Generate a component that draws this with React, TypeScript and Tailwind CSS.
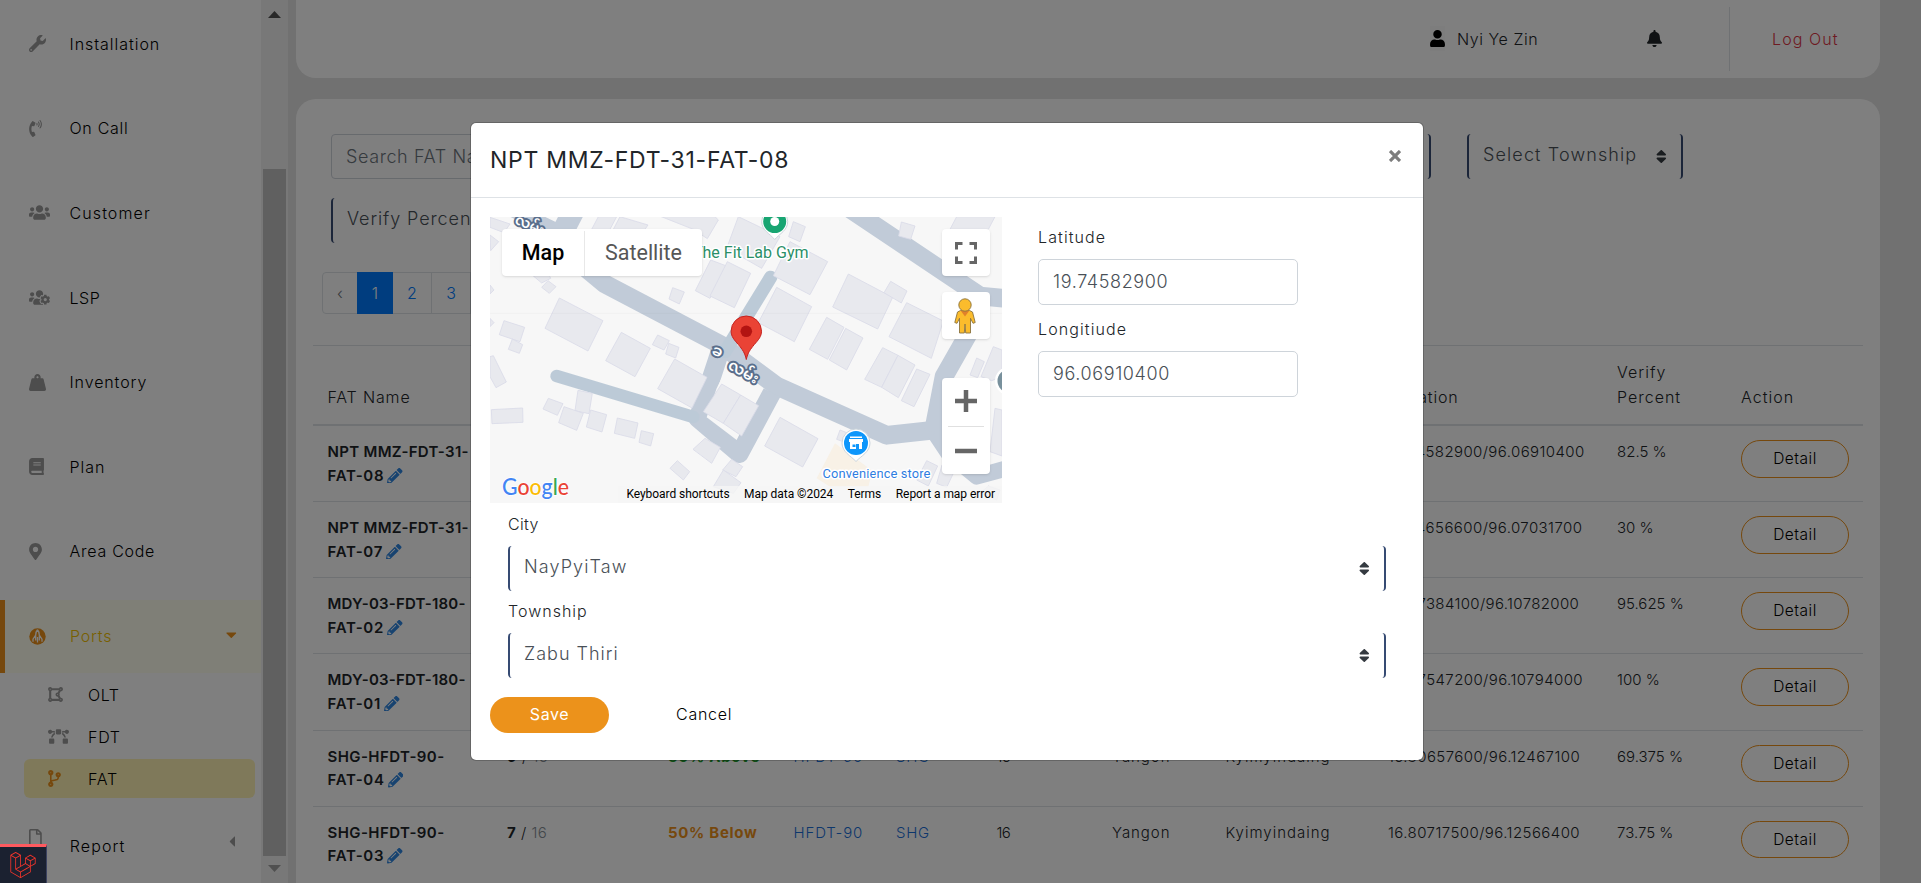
import type { ReactNode } from 'react';
import type { IconType } from 'react-icons';
import {
  FaBell,
  FaBezierCurve,
  FaBook,
  FaCaretDown,
  FaCaretLeft,
  FaCodeBranch,
  FaDrawPolygon,
  FaLaravel,
  FaMapMarkerAlt,
  FaPencilAlt,
  FaPhoneVolume,
  FaRegFile,
  FaSort,
  FaUser,
  FaUsers,
  FaUsersCog,
  FaWeightHanging,
  FaWrench,
} from 'react-icons/fa';

type NavItem = { label: string; icon: IconType; size: string; tracking: string };

const NAV: NavItem[] = [
  { label: 'Installation', icon: FaWrench, size: 'h-[17px] w-[17px]', tracking: 'tracking-[0.96px]' },
  { label: 'On Call', icon: FaPhoneVolume, size: 'h-[17px] w-[13px]', tracking: 'tracking-[0.7px]' },
  { label: 'Customer', icon: FaUsers, size: 'h-[17px] w-[21px]', tracking: 'tracking-[1.1px]' },
  { label: 'LSP', icon: FaUsersCog, size: 'h-[17px] w-[21px]', tracking: 'tracking-[0.5px]' },
  { label: 'Inventory', icon: FaWeightHanging, size: 'h-[17px] w-[17px]', tracking: 'tracking-[0.9px]' },
  { label: 'Plan', icon: FaBook, size: 'h-[17px] w-[15px]', tracking: 'tracking-[0.95px]' },
  { label: 'Area Code', icon: FaMapMarkerAlt, size: 'h-[17px] w-[13px]', tracking: 'tracking-[0.73px]' },
];

const SUB_NAV: (NavItem & { active?: boolean })[] = [
  { label: 'OLT', icon: FaDrawPolygon, size: 'h-[17px] w-[15px]', tracking: 'tracking-[0.5px]' },
  { label: 'FDT', icon: FaBezierCurve, size: 'h-[17px] w-[21px]', tracking: 'tracking-[0.75px]' },
  { label: 'FAT', icon: FaCodeBranch, size: 'h-[17px] w-[13px]', tracking: 'tracking-[0.75px]', active: true },
];

type Row = {
  name: [string, string];
  nameTracking: string;
  used: number;
  above: boolean;
  fdt: string;
  olt: string;
  city: string;
  township: string;
  location: string;
  locationTracking: string;
  percent: string;
};

const ROWS: Row[] = [
  { name: ['NPT MMZ-FDT-31-', 'FAT-08'], nameTracking: 'tracking-[0.32px]', used: 9, above: true, fdt: 'FDT-31', olt: 'NPT', city: 'NayPyiTaw', township: 'Zabu Thiri', location: '19.74582900/96.06910400', locationTracking: 'tracking-[0.4px]', percent: '82.5 %' },
  { name: ['NPT MMZ-FDT-31-', 'FAT-07'], nameTracking: 'tracking-[0.32px]', used: 9, above: true, fdt: 'FDT-31', olt: 'NPT', city: 'NayPyiTaw', township: 'Zabu Thiri', location: '19.74656600/96.07031700', locationTracking: 'tracking-[0.42px]', percent: '30 %' },
  { name: ['MDY-03-FDT-180-', 'FAT-02'], nameTracking: 'tracking-[0.2px]', used: 9, above: true, fdt: 'FDT-180', olt: 'MDY', city: 'Mandalay', township: 'Mahar Aung', location: '21.97384100/96.10782000', locationTracking: 'tracking-[0.36px]', percent: '95.625 %' },
  { name: ['MDY-03-FDT-180-', 'FAT-01'], nameTracking: 'tracking-[0.2px]', used: 9, above: true, fdt: 'FDT-180', olt: 'MDY', city: 'Mandalay', township: 'Mahar Aung', location: '21.97547200/96.10794000', locationTracking: 'tracking-[0.4px]', percent: '100 %' },
  { name: ['SHG-HFDT-90-', 'FAT-04'], nameTracking: 'tracking-[0.42px]', used: 9, above: true, fdt: 'HFDT-90', olt: 'SHG', city: 'Yangon', township: 'Kyimyindaing', location: '16.80657600/96.12467100', locationTracking: 'tracking-[0.43px]', percent: '69.375 %' },
  { name: ['SHG-HFDT-90-', 'FAT-03'], nameTracking: 'tracking-[0.42px]', used: 7, above: false, fdt: 'HFDT-90', olt: 'SHG', city: 'Yangon', township: 'Kyimyindaing', location: '16.80717500/96.12566400', locationTracking: 'tracking-[0.43px]', percent: '73.75 %' },
];

const COLUMNS =
  'grid grid-cols-[179.5px_161px_125.5px_102.5px_100.5px_115.5px_113.5px_162.5px_229px_124px_1fr] pl-[14.5px]';

function PortsIcon() {
  return (
    <svg className="size-[17px]" viewBox="0 0 17 17" fill="none">
      <circle cx="8.500" cy="8.500" r="8.200" fill="#ec911a" />
      <path
        d="M8.500 1.800C7 3.500 6.600 5 6.700 7L4 11.200v2.600M8.500 1.800C10 3.500 10.400 5 10.300 7l2.700 4.200v2.600M8.500 9v5.500M6.700 7v5.500M10.300 7v5.500"
        stroke="#fff"
        strokeWidth="1.300"
      />
    </svg>
  );
}

function Sidebar() {
  return (
    <aside className="flex h-full w-72 shrink-0 bg-white text-base font-light text-black">
      <nav className="flex w-[261px] flex-col pt-2">
        {NAV.map(({ label, icon: Icon, size, tracking }) => (
          <div key={label} className="mb-3 flex h-[72.6px] shrink-0 items-center pb-px pl-[29px]">
            <span className="w-[40.5px] text-[#9a9a9a]">
              <Icon className={size} />
            </span>
            <span className={tracking}>{label}</span>
          </div>
        ))}
        <div className="flex h-[73px] shrink-0 items-center border-l-5 border-[#ec911a] bg-[#ffffef] pb-px pl-6">
          <PortsIcon />
          <span className="ml-6 grow tracking-[0.8px] text-[#f0c000]">Ports</span>
          <FaCaretDown className="-mt-1 mr-6 h-[17px] w-[10.6px] text-[#ec911a]" />
        </div>
        {SUB_NAV.map(({ label, icon: Icon, size, tracking, active }) => (
          <div
            key={label}
            className={
              active
                ? 'ml-6 mt-[2px] flex h-[39px] w-[231px] shrink-0 items-center rounded-md bg-[#fff3b4] pl-6'
                : 'ml-6 flex h-[42px] w-[231px] shrink-0 items-center pl-6 pt-px'
            }
          >
            <span className={active ? 'w-10 text-[#ec911a]' : 'w-10 text-[#9a9a9a]'}>
              <Icon className={size} />
            </span>
            <span className={tracking}>{label}</span>
          </div>
        ))}
        <div className="mt-[11px] flex h-[73px] shrink-0 items-center pl-[29px]">
          <FaRegFile className="-mt-4 h-[17px] w-[12.8px] text-[#9a9a9a]" />
          <span className="ml-7 grow tracking-[1.1px]">Report</span>
          <FaCaretLeft className="-mt-2 mr-[26px] h-[17px] w-[6.4px] text-[#9a9a9a]" />
        </div>
      </nav>
      <div className="flex w-[27px] flex-col items-center bg-[#f1f1f1]">
        <svg className="mt-[11px] h-[7px] w-[13px] shrink-0" viewBox="0 0 13 7">
          <path d="M0 7 6.500 0 13 7z" fill="#505050" />
        </svg>
        <div className="mt-[151px] h-[687px] w-[23px] shrink-0 bg-[#c1c1c1]" />
        <svg className="mt-[9px] h-[7px] w-[13px] shrink-0" viewBox="0 0 13 7">
          <path d="M0 0h13L6.500 7z" fill="#a0a0a0" />
        </svg>
      </div>
    </aside>
  );
}

function Header() {
  return (
    <header className="flex h-[78px] shrink-0 items-center rounded-b-[20px] bg-white pb-px text-base font-light text-[#212529]">
      <span className="ml-[1134px] flex h-[25px] w-[15px] items-center bg-[#fafafa] text-black">
        <FaUser className="h-[17px] w-[15px]" />
      </span>
      <span className="ml-3 w-[189px] tracking-[0.55px]">Nyi Ye Zin</span>
      <FaBell className="ml-px h-[17px] w-[15px]" />
      <span className="ml-[67px] h-16 w-px bg-[#dee2e6]" />
      <span className="ml-[42px] tracking-[1.1px] text-[#dc3545]">Log Out</span>
    </header>
  );
}

function BracketSelect({ children, className }: { children: ReactNode; className: string }) {
  return (
    <div
      className={`flex h-[45px] items-center justify-between rounded border-x-2 border-[#364b73] px-[14px] text-lg font-light text-[#495057] ${className}`}
    >
      <span className="-mt-[3px]">{children}</span>
      <FaSort className="h-[17px] w-[10.6px] text-[#343a40]" />
    </div>
  );
}

function Pagination() {
  return (
    <div className="ml-[9px] mt-[29px] flex h-[42px] w-[300px] items-stretch rounded border border-[#dee2e6] text-base font-light text-[#007bff]">
      <span className="flex w-[34px] items-center justify-center text-[#6c757d]">‹</span>
      <span className="-my-px flex w-9 items-center justify-center bg-[#007bff] text-white">1</span>
      <span className="flex w-[39px] items-center justify-center border-r border-[#dee2e6]">2</span>
      <span className="flex w-[39px] items-center justify-center border-r border-[#dee2e6]">3</span>
      <span className="flex w-[39px] items-center justify-center">4</span>
    </div>
  );
}

function PortTable() {
  return (
    <div className="mt-[31px] w-[1550px] self-center text-[15px] font-light text-[#212529]">
      <div
        className={`${COLUMNS} h-[81px] items-end border-b-2 border-t border-[#dee2e6] pb-[14px] text-base leading-[25px] tracking-[0.85px]`}
      >
        <span>FAT Name</span>
        <span>Used</span>
        <span>Status</span>
        <span>FDT</span>
        <span>OLT</span>
        <span>Port</span>
        <span>City</span>
        <span>Township</span>
        <span>Location</span>
        <span className="w-20 tracking-[1px]">Verify Percent</span>
        <span className="tracking-[1px]">Action</span>
      </div>
      {ROWS.map((row, i) => (
        <div
          key={row.name.join('')}
          className={`${COLUMNS} items-start pt-[14px] leading-[23.5px] ${i === 0 ? 'h-[75px]' : 'h-[76.2px] border-t border-[#dee2e6]'}`}
        >
          <span className="flex flex-col items-start font-semibold">
            <span className={row.nameTracking}>{row.name[0]}</span>
            <span className="flex items-center tracking-[0.7px]">
              {row.name[1]}
              <FaPencilAlt className="ml-[3px] text-[15.5px] text-[#2f86e0]" />
            </span>
          </span>
          <span className="tracking-[0.5px]">
            <b className="font-bold">{row.used}</b> / <span className="text-[#868e96]">16</span>
          </span>
          {row.above ? (
            <span className="font-bold tracking-[0.7px] text-[#1e9e2e]">50% Above</span>
          ) : (
            <span className="font-bold tracking-[0.7px] text-[#ec911a]">50% Below</span>
          )}
          <span className="tracking-[0.85px] text-[#1b6fd8]">{row.fdt}</span>
          <span className="tracking-[0.7px] text-[#1b6fd8]">{row.olt}</span>
          <span className="tracking-[-0.6px]">16</span>
          <span className="tracking-[0.95px]">{row.city}</span>
          <span className="tracking-[1px]">{row.township}</span>
          <span className={row.locationTracking}>{row.location}</span>
          <span>{row.percent}</span>
          <span className="flex h-[37.500px] w-[108px] items-center justify-center rounded-full border border-[#ec911a] text-[15.5px] tracking-[0.5px] text-black">
            Detail
          </span>
        </div>
      ))}
    </div>
  );
}

const BUILDINGS = [
  '30,22 90,42 72,68 30,52',
  '30,75 56,95 32,122',
  '30,225 42,240 30,252',
  '30,325 42,338 30,350',
  '238,264 369,332 324,423 195,355',
  '72,332 134,352 120,395 58,374',
  '97,387 128,404 118,430 85,418',
  '40,437 79,516 48,533 30,500 30,440',
  '424,367 511,415 465,500 377,452',
  '533,375 568,392 552,420 517,404',
  '566,400 597,412 587,444 557,432',
  '584,447 681,502 636,594 533,536',
  '294,541 337,550 327,611 285,602',
  '205,565 249,581 232,616 189,597',
  '252,590 310,610 290,661 236,638',
  '332,600 380,614 366,666 319,651',
  '412,624 474,639 464,685 403,670',
  '484,662 521,671 512,708 477,697',
  '34,599 128,594 129,637 36,641',
  '204,212 228,230 208,250 185,232',
  '160,198 205,190 212,205 185,219',
  '578,233 613,246 598,282 567,267',
  '355,20 410,20 390,58 335,58',
  '420,20 504,45 495,58 400,58',
  '544,20 705,20 715,30 682,86 640,58',
  '692,150 745,170 690,265 646,242',
  '742,155 812,190 763,293 690,258',
  '775,20 900,80 845,175 740,115',
  '940,35 976,50 960,95 926,80',
  '930,95 1043,155 990,254 880,197',
  '890,232 995,290 943,395 835,338',
  '1105,192 1238,262 1193,357 1058,291',
  '1232,214 1281,243 1264,279 1212,248',
  '1280,278 1390,333 1354,445 1227,380',
  '1040,322 1092,352 1043,448 988,418',
  '1097,355 1149,384 1100,480 1048,450',
  '1208,413 1254,436 1205,532 1154,508',
  '1254,436 1305,465 1255,563 1205,532',
  '1310,477 1350,493 1302,590 1264,572',
  '675,685 721,712 695,760 639,718',
  '592,752 629,785 610,810 570,775',
  '755,748 788,770 768,800 728,780',
  '730,780 783,818 760,850 700,830',
  '900,622 1014,686 968,771 854,708',
  '1080,660 1110,672 1095,697 1070,688',
  '1264,36 1305,48 1292,88 1256,78',
  '1430,20 1545,20 1525,58 1410,58',
  '1490,444 1513,455 1493,503 1470,495',
  '1540,410 1566,420 1566,500 1535,512 1503,500',
  '1340,752 1373,768 1345,828 1310,810',
  '1386,765 1420,790 1400,832 1370,820',
  '1545,595 1566,600 1566,738 1530,725',
  '1525,828 1560,840 1550,870 1500,850',
  '725,522 782,555 730,640 670,605',
  '782,555 836,587 785,678 730,640',
];

function MapDrawing() {
  return (
    <svg className="block h-full w-full" viewBox="0 0 512 286" preserveAspectRatio="none">
      <rect width="512" height="286" fill="#f7f7f7" />
      <g transform="translate(-10 -7) scale(.33333)" strokeLinejoin="round">
        <path d="M1065 700l-55 105 40 25h115l12-48z" fill="#f8f1e6" />
        <g fill="none" stroke="#c1cbd8">
          <path d="M60-20 275 85" strokeWidth="46" />
          <path d="M282 0 225 110" strokeWidth="66" />
          <path d="M300 160l75 62 350 184 165 122 330 148 145-16 22 15" strokeWidth="56" />
          <path d="M1360 665l32-165 88-155 20-80" strokeWidth="56" />
          <path d="M1365 670l40 60 85 70 90-25" strokeWidth="48" />
          <path d="M1100-10 1500 258l80 8" strokeWidth="56" />
          <path d="M725 410l-33 100-38 115 124 106L876 548" strokeWidth="56" />
          <path d="M872 202 735 425" stroke="#bccad7" strokeWidth="40" strokeLinecap="round" />
          <path d="M230 498 640 621" stroke="#bccad7" strokeWidth="38" strokeLinecap="round" />
        </g>
        <path d="M743 468l104 67-77 155-90-68 30-87z" fill="#f7f7f7" />
        <g fill="#e8e9ee" stroke="#dadbe8" strokeWidth="2.500">
          {BUILDINGS.map((points) => (
            <polygon key={points} points={points} />
          ))}
        </g>
        <path d="M30 310h1536" stroke="#000" strokeOpacity=".03" strokeWidth="3" />
      </g>
      <g
        fontFamily="'Noto Sans Myanmar', Padauk, 'Noto Sans', sans-serif"
        fontSize="14"
        fontWeight="600"
        fill="#fff"
        stroke="#5a6f8c"
        strokeWidth="4"
        paintOrder="stroke"
      >
        <text transform="translate(221 137) rotate(20)" fontSize="15">
          ခ
        </text>
        <text transform="translate(237 151) rotate(30)" fontSize="15">
          လမ်း
        </text>
        <text transform="translate(24 6) rotate(24)">လမ်း</text>
      </g>
      <g
        fontFamily="Roboto, sans-serif"
        fontWeight="400"
        stroke="#fff"
        strokeWidth="3"
        paintOrder="stroke"
        strokeLinejoin="round"
      >
        <text x="318.500" y="41" fontSize="16" fill="#2b8f68" textAnchor="end">
          The Fit Lab Gym
        </text>
        <text x="332.500" y="260.500" fontSize="13" fill="#2f7de1" textLength="108">
          Convenience store
        </text>
      </g>
      <g transform="translate(284.700 4.500)">
        <path d="M0 18C-5 12-13 9-13 0A13 13 0 0 1 13 0C13 9 5 12 0 18z" fill="#fff" stroke="#ccd5dc" />
        <circle r="11.500" fill="#18a572" />
        <circle r="4.500" fill="#fff" />
      </g>
      <g transform="translate(366 226)">
        <path d="M0 18.500C-5 13-14 9-14 0A14 14 0 0 1 14 0C14 9 5 13 0 18.500z" fill="#fff" stroke="#ccd5dc" />
        <circle r="12" fill="#0d96fb" />
        <path d="M-6-6.500H6V-5H-6zM-7-4H7V-1H6V6H3V1H0V6H-6V-1H-7z" fill="#fff" />
        <path d="M-3.500 1.500h3v2.500h-3z" fill="#0d96fb" />
      </g>
      <g transform="translate(519 164)">
        <circle r="14" fill="#fff" />
        <circle r="11.500" fill="#78909c" />
      </g>
      <path
        d="M256.300 142.500c-1.500-7-4-10-8-15-4-4.500-7.200-8-7.200-13.300a15.200 15.200 0 0 1 30.400 0c0 5.300-3.200 8.800-7.200 13.300-4 5-6.500 8-8 15z"
        fill="#ea4335"
        stroke="#c5221f"
      />
      <circle cx="256.300" cy="114.300" r="5.800" fill="#b31412" />
      <text
        x="12"
        y="277.500"
        fontFamily="Lato, sans-serif"
        fontWeight="500"
        fontSize="23.500"
        textLength="67"
        lengthAdjust="spacingAndGlyphs"
        stroke="#fff"
        strokeWidth="1.500"
        paintOrder="stroke"
      >
        <tspan fill="#4285f4">G</tspan>
        <tspan fill="#ea4335">o</tspan>
        <tspan fill="#fbbc05">o</tspan>
        <tspan fill="#4285f4">g</tspan>
        <tspan fill="#34a853">l</tspan>
        <tspan fill="#ea4335">e</tspan>
      </text>
    </svg>
  );
}

function MapPanel() {
  return (
    <div className="relative h-[286px] w-[512px] shrink-0 overflow-hidden font-[Roboto,sans-serif] font-normal">
      <MapDrawing />
      <div className="absolute left-3 top-3 flex h-[47px] w-[200px] rounded-sm bg-white pt-0.5 text-[21.500px] shadow">
        <span className="flex w-[83px] items-center justify-center border-r border-[#e8e8e8] font-medium text-black">
          Map
        </span>
        <span className="flex grow items-center justify-center text-[#565656]">Satellite</span>
      </div>
      <div className="absolute right-3 top-3 flex h-[47px] w-12 items-center justify-center rounded-sm bg-white shadow">
        <svg className="size-[22px]" viewBox="0 0 22 22" fill="none" stroke="#666" strokeWidth="3">
          <path d="M1.500 7.500v-6h6M14.500 1.500h6v6M20.500 14.500v6h-6M7.500 20.500h-6v-6" />
        </svg>
      </div>
      <div className="absolute right-3 top-[75px] flex h-[47px] w-12 items-center justify-center rounded-sm bg-white shadow">
        <svg className="-ml-0.5 h-9 w-[22px]" viewBox="0 0 22 36">
          <path
            d="M6.500 12.500 3.500 14 .8 24.500l2.200.8 2.500-5V35h4.800l.7-9 .7 9h4.800V20.300l2.500 5 2.200-.8L18.500 14l-3-1.500z"
            fill="#fbbc2c"
            stroke="#8a7340"
            strokeWidth=".9"
          />
          <path d="M6.500 12.500h9L11 18.500z" fill="#e0812a" />
          <circle cx="11" cy="7" r="6.200" fill="#fbbc2c" stroke="#8a7340" strokeWidth=".9" />
        </svg>
      </div>
      <div className="absolute right-3 top-[161px] flex h-24 w-12 flex-col items-center justify-between rounded-sm bg-white py-3 shadow">
        <svg className="h-[22px] w-[22px]" viewBox="0 0 22 22" stroke="#666" strokeWidth="4.500">
          <path d="M11 0v22M0 11h22" />
        </svg>
        <span className="h-px w-9 bg-[#e0e0e0]" />
        <svg className="h-[22px] w-[22px]" viewBox="0 0 22 22" stroke="#666" strokeWidth="4.500">
          <path d="M0 11h22" />
        </svg>
      </div>
      <div className="absolute bottom-0 right-0 flex h-[17.5px] items-center gap-[14.5px] bg-[#f5f5f5]/80 pl-2 pr-[7px] text-[12px] tracking-[-0.05px] text-black">
        <span>Keyboard shortcuts</span>
        <span>Map data ©2024</span>
        <span>Terms</span>
        <span>Report a map error</span>
      </div>
    </div>
  );
}

function CoordinateField({ label, value, className }: { label: string; value: string; className: string }) {
  return (
    <label className={`flex flex-col ${className}`}>
      <span className="mb-[9px] h-6 text-base leading-[22px] tracking-[1.1px]">{label}</span>
      <span className="flex h-[46px] w-[260px] items-center rounded-[5px] border border-[#ced4da] pl-[14px] text-lg tracking-[0.62px] text-[#495057]">
        {value}
      </span>
    </label>
  );
}

function EditDialog() {
  return (
    <section className="flex h-[639px] w-[954px] flex-col rounded-[6px] border border-black/20 bg-white bg-clip-padding font-light text-[#212529]">
      <div className="flex h-[75px] shrink-0 items-center justify-between border-b border-[#dee2e6] pl-[19px] pr-[22px]">
        <h5 className="text-[23px] font-normal tracking-[0.72px]">NPT MMZ-FDT-31-FAT-08</h5>
        <svg className="-mt-2 size-3" viewBox="0 0 12 12" stroke="#7d7d7d" strokeWidth="3.200">
          <path d="M1 1l10 10M11 1 1 11" />
        </svg>
      </div>
      <div className="flex flex-col px-[19px] pt-[19px]">
        <div className="flex">
          <MapPanel />
          <div className="ml-9 flex flex-col pt-[9px]">
            <CoordinateField label="Latitude" value="19.74582900" className="" />
            <CoordinateField label="Longitiude" value="96.06910400" className="mt-[12.5px]" />
          </div>
        </div>
        <div className="flex flex-col px-[18px] pt-[8.5px] text-base leading-6">
          <span className="mb-[10px] tracking-[0.35px]">City</span>
          <BracketSelect className="w-[878px] tracking-[1.1px]">NayPyiTaw</BracketSelect>
          <span className="mb-[10px] mt-2 tracking-[1.02px]">Township</span>
          <BracketSelect className="w-[878px] tracking-[1px]">Zabu Thiri</BracketSelect>
        </div>
        <div className="mt-[19px] flex items-center text-base">
          <span className="flex h-9 w-[119px] items-center justify-center rounded-full bg-[#ec921b] pb-0.5 font-normal tracking-[0.6px] text-white">
            Save
          </span>
          <span className="ml-[67px] pb-0.5 tracking-[0.75px] text-black">Cancel</span>
        </div>
      </div>
    </section>
  );
}

export default function App() {
  return (
    <div className="relative h-[883px] w-[1921px] overflow-hidden font-[Inter,sans-serif]">
      <div className="flex h-full bg-[#e3e3e3]">
        <Sidebar />
        <main className="ml-2 flex h-full w-[1584px] flex-col">
          <Header />
          <div className="mt-[21px] flex grow flex-col rounded-t-[20px] bg-white pt-[35px]">
            <div className="flex pl-[35px]">
              <span className="flex h-[45px] w-[360px] items-center rounded border border-[#ced4da] pl-[14px] text-lg font-light tracking-[0.6px] text-[#6c757d]">
                Search FAT Name
              </span>
              <BracketSelect className="ml-9 w-[330px]">Select Status</BracketSelect>
              <BracketSelect className="ml-9 w-[338px]">Select City</BracketSelect>
              <BracketSelect className="ml-9 w-[216px] tracking-[1.12px]">Select Township</BracketSelect>
            </div>
            <div className="mt-[19px] flex pl-[35px]">
              <BracketSelect className="w-[260px] tracking-[0.9px]">Verify Percent</BracketSelect>
            </div>
            <div className="flex pl-[17px]">
              <Pagination />
            </div>
            <PortTable />
          </div>
        </main>
      </div>
      <div className="absolute inset-0 bg-black/50" />
      <div className="absolute left-[470px] top-[122px]">
        <EditDialog />
      </div>
      <div className="absolute bottom-0 left-0 flex h-[39px] w-[47px] items-center justify-center border-r border-t-3 border-r-[#3b4260] border-t-[#ff5a5f] bg-[#1b2130]">
        <FaLaravel className="size-[26px] text-[#f4352b]" />
      </div>
    </div>
  );
}
